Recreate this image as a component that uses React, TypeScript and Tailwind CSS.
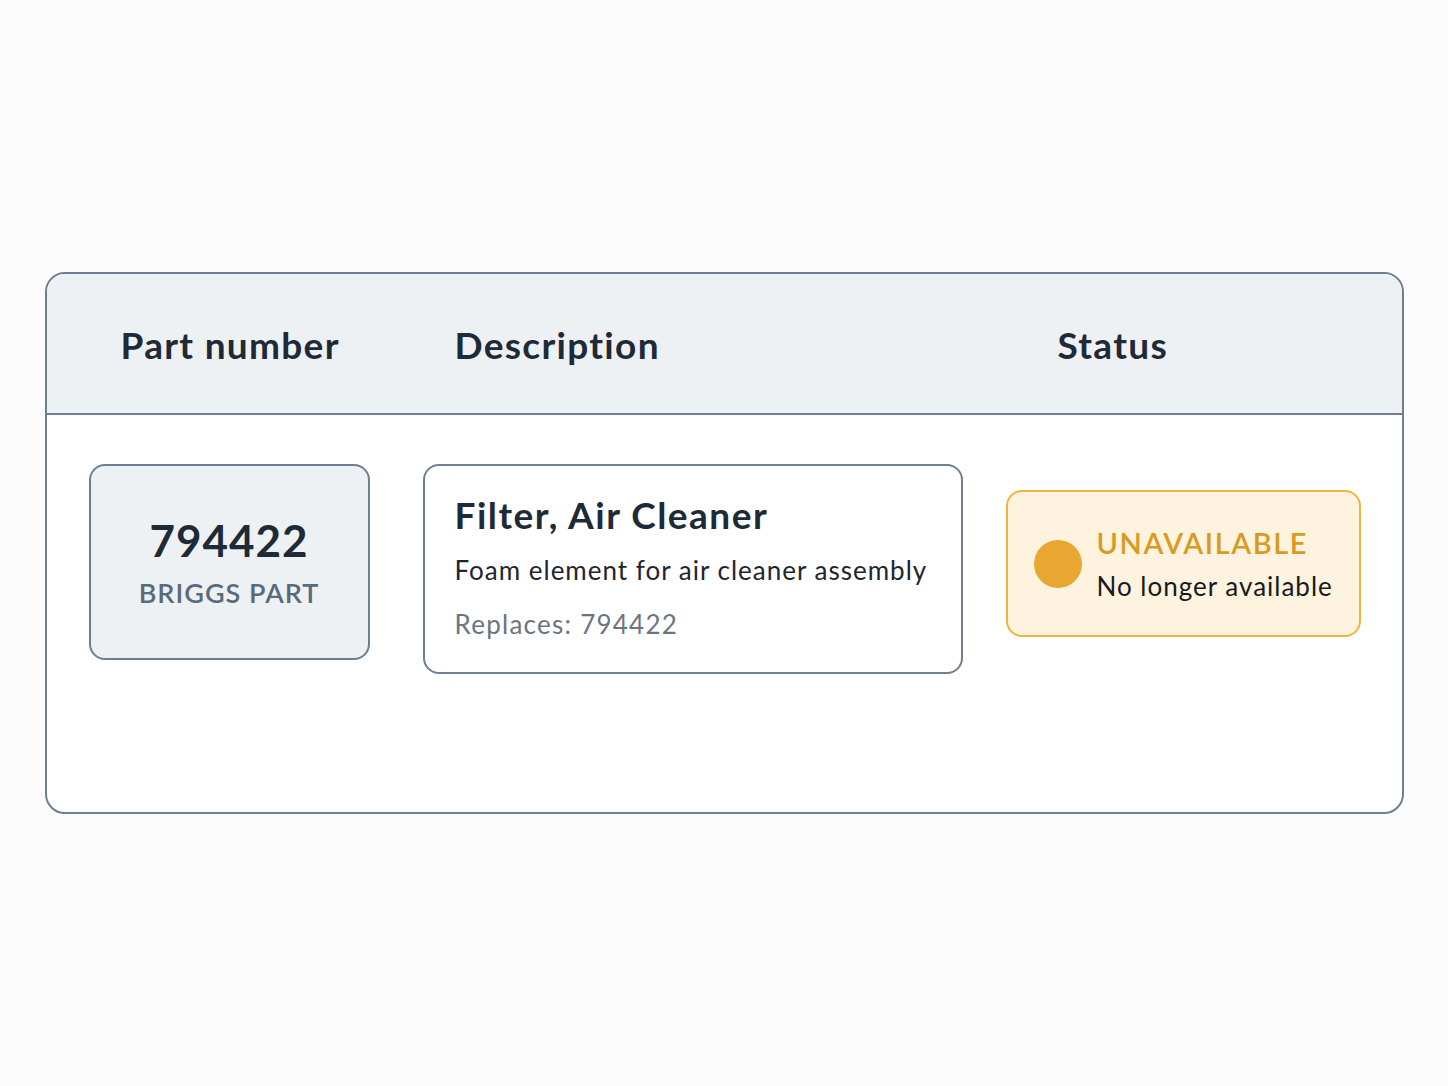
import React from "react";

const font = { fontFamily: "Lato, 'Open Sans', sans-serif" };

function PartCell({ number, brand }: { number: string; brand: string }) {
  return (
    <div className="flex h-[196px] w-[281px] shrink-0 flex-col items-center justify-center rounded-[16px] border-2 border-[#6f7f8f] bg-[#eef1f4]">
      <p className="text-[44px] font-bold leading-none tracking-[1px] text-[#1e2a38]">{number}</p>
      <p className="mt-[17px] text-[27px] font-semibold leading-none tracking-[1px] text-[#5a6a7b]">{brand}</p>
    </div>
  );
}

function DescriptionCell() {
  return (
    <div className="h-[210px] w-[540px] shrink-0 whitespace-nowrap rounded-[16px] border-2 border-[#6f7f8f] bg-white pl-[30px] pt-[30px]">
      <p className="text-[37px] font-bold leading-none tracking-[1.5px] text-[#1e2a38]">Filter, Air Cleaner</p>
      <p className="mt-[24px] text-[26px] leading-none tracking-[1px] text-[#1f2530]">Foam element for air cleaner assembly</p>
      <p className="mt-[28px] text-[26px] leading-none tracking-[1.25px] text-[#6b7582]">Replaces: 794422</p>
    </div>
  );
}

function StatusCell() {
  return (
    <div className="mt-[26px] flex h-[147px] w-[355px] shrink-0 items-center whitespace-nowrap rounded-[16px] border-2 border-[#f0b43a] bg-[#fdf3de] pl-[26px]">
      <span className="h-[48px] w-[48px] shrink-0 rounded-full bg-[#e9a630]" />
      <div className="ml-[15px]">
        <p className="text-[29px] font-semibold leading-none tracking-[1.6px] text-[#d99a22]">UNAVAILABLE</p>
        <p className="mt-[16px] text-[26px] leading-none tracking-[1px] text-[#161a20]">No longer available</p>
      </div>
    </div>
  );
}

export default function App() {
  return (
    <div className="flex h-[1086px] w-full items-start justify-center bg-[#fcfcfd] pt-[272px]" style={font}>
      <div className="h-[542px] w-[1359px] overflow-hidden rounded-[20px] border-2 border-[#6f7f8f] bg-white">
        {/* header */}
        <div className="grid h-[141px] grid-cols-[334px_603px_1fr] items-center border-b-2 border-[#6f7f8f] bg-[#eef1f4] pl-[74px] pt-[2px] text-[37px] font-bold tracking-[1.3px] text-[#1e2a38]">
          <p>Part number</p>
          <p>Description</p>
          <p>Status</p>
        </div>
        {/* row */}
        <div className="flex items-start pl-[42px] pt-[49px]">
          <PartCell number="794422" brand="BRIGGS PART" />
          <div className="ml-[53px]">
            <DescriptionCell />
          </div>
          <div className="ml-[43px]">
            <StatusCell />
          </div>
        </div>
      </div>
    </div>
  );
}
